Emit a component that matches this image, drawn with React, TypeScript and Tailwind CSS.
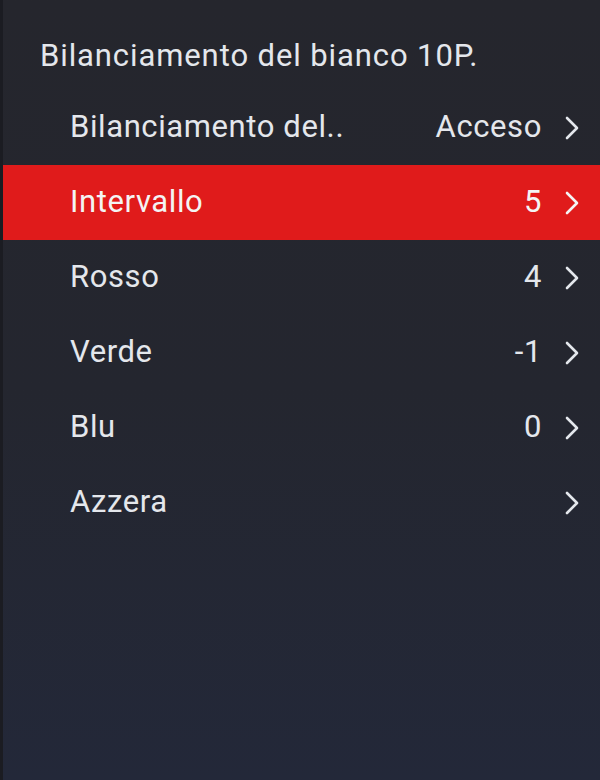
import { useState } from "react";

type Row = {
  label: string;
  value: string;
};

const rows: Row[] = [
  { label: "Bilanciamento del..", value: "Acceso" },
  { label: "Intervallo", value: "5" },
  { label: "Rosso", value: "4" },
  { label: "Verde", value: "-1" },
  { label: "Blu", value: "0" },
  { label: "Azzera", value: "" },
];

function Chevron() {
  return (
    <svg width="16" height="26" viewBox="0 0 16 26" fill="none" className="shrink-0">
      <polyline
        points="3,3 13,13 3,23"
        stroke="currentColor"
        strokeWidth="2.6"
        strokeLinecap="round"
        strokeLinejoin="round"
      />
    </svg>
  );
}

export default function App() {
  const [selected] = useState(1);

  return (
    <div
      className="w-[600px] h-[780px] flex flex-col bg-gradient-to-b from-[#25262d] via-[#24262f] to-[#232839] text-[#e4e7ec] overflow-hidden border-l-[3px] border-[#1b1c22]"
      style={{ fontFamily: "Roboto, 'Noto Sans', sans-serif" }}
    >
      <div className="h-[90px] flex items-center pl-[37px] pt-[22px] text-[31px] tracking-[0.9px]">
        Bilanciamento del bianco 10P.
      </div>
      <ul className="flex flex-col">
        {rows.map((row, i) => (
          <li
            key={row.label}
            className={
              "h-[75px] flex items-center pl-[67px] pr-[20px] text-[31px] tracking-[0.6px] " +
              (i === selected ? "bg-[#e01b1b] text-[#f4f4f4]" : "")
            }
          >
            <span className="flex-1">{row.label}</span>
            {row.value && <span className="mr-[22px]">{row.value}</span>}
            <Chevron />
          </li>
        ))}
      </ul>
    </div>
  );
}
